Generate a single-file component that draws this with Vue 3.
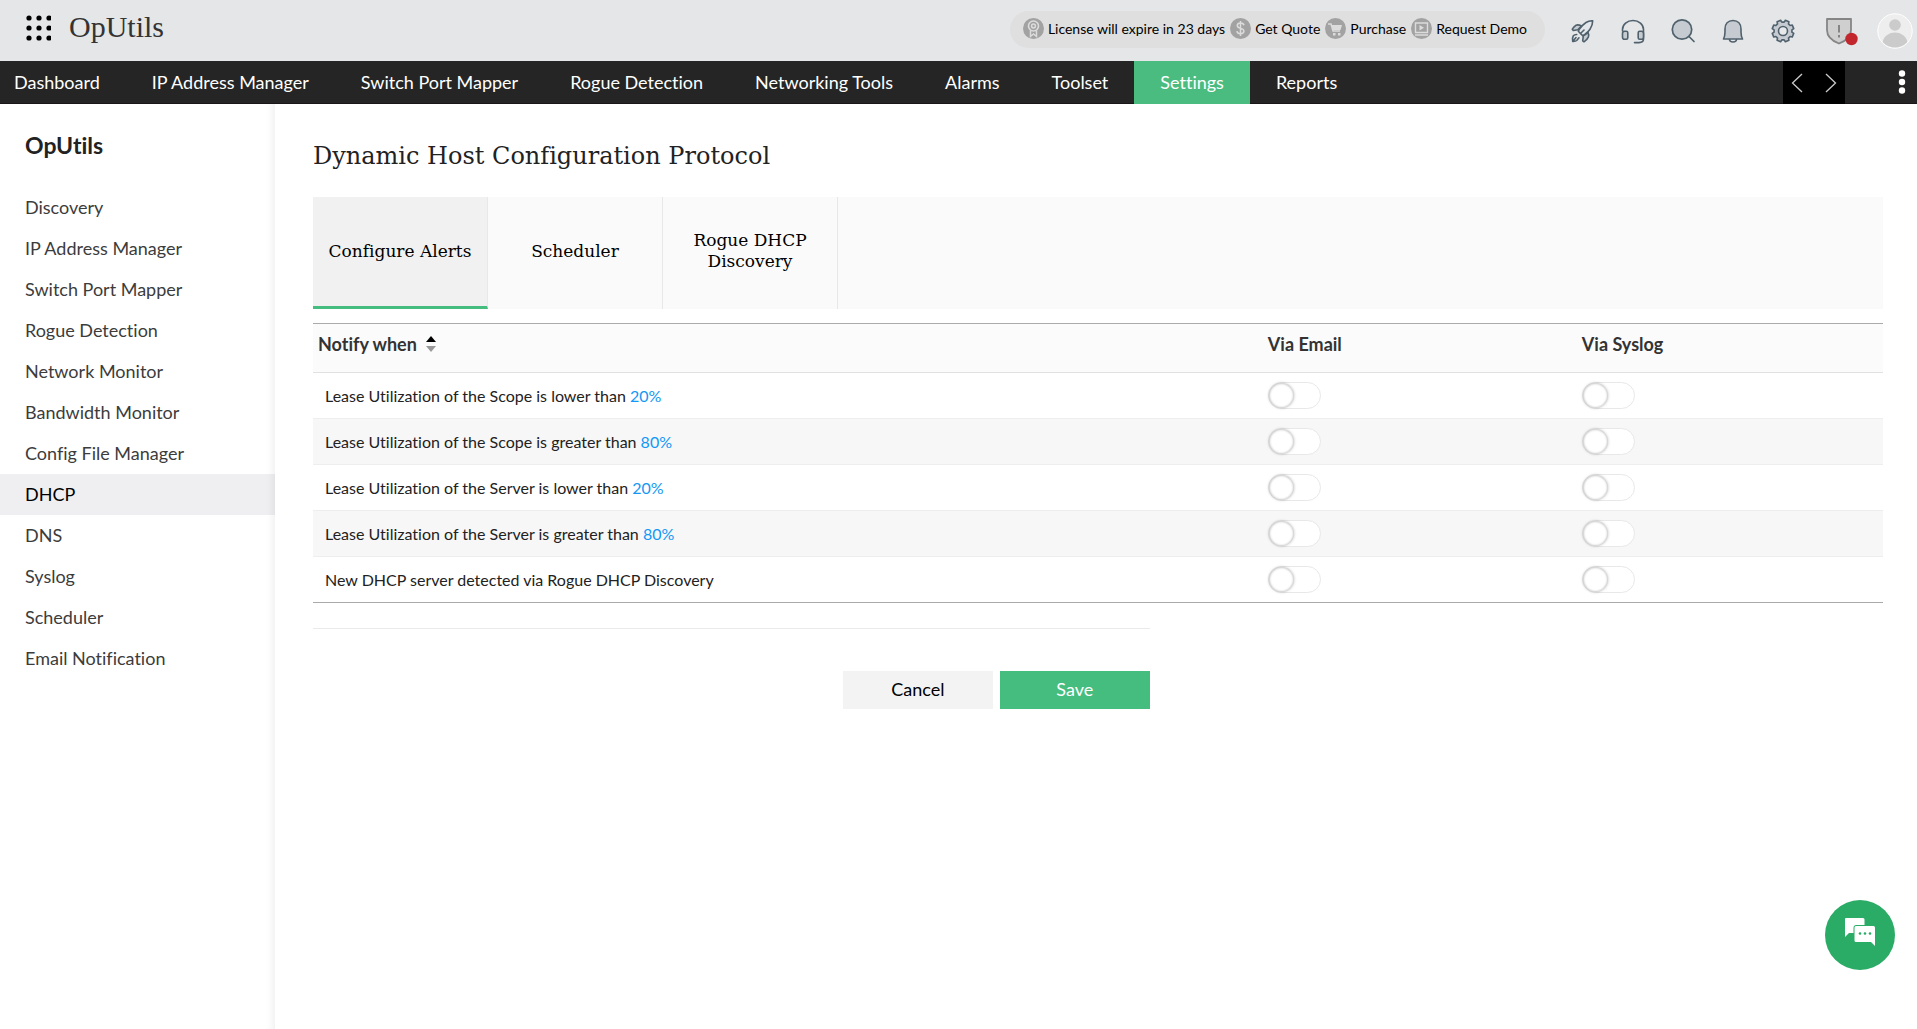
<script setup>
import { ref, reactive } from 'vue'

const navItems = ['Dashboard', 'IP Address Manager', 'Switch Port Mapper', 'Rogue Detection', 'Networking Tools', 'Alarms', 'Toolset', 'Settings', 'Reports']
const activeNav = ref('Settings')

const sideItems = ['Discovery', 'IP Address Manager', 'Switch Port Mapper', 'Rogue Detection', 'Network Monitor', 'Bandwidth Monitor', 'Config File Manager', 'DHCP', 'DNS', 'Syslog', 'Scheduler', 'Email Notification']
const activeSide = ref('DHCP')

const tabs = ['Configure Alerts', 'Scheduler', 'Rogue DHCP Discovery']
const activeTab = ref('Configure Alerts')

const alerts = reactive([
  { text: 'Lease Utilization of the Scope is lower than', value: '20%', email: false, syslog: false },
  { text: 'Lease Utilization of the Scope is greater than', value: '80%', email: false, syslog: false },
  { text: 'Lease Utilization of the Server is lower than', value: '20%', email: false, syslog: false },
  { text: 'Lease Utilization of the Server is greater than', value: '80%', email: false, syslog: false },
  { text: 'New DHCP server detected via Rogue DHCP Discovery', value: '', email: false, syslog: false },
])

// Outline of an eight-toothed gear centred on (13, 13)
const gearPoints = Array.from({ length: 8 }, (_, k) => k * 45 + 22.5)
  .flatMap((t) => [[t - 15, 9], [t - 10, 11], [t + 10, 11], [t + 15, 9]])
  .map(([deg, r]) => {
    const a = (deg * Math.PI) / 180
    return `${(13 + r * Math.cos(a)).toFixed(2)},${(13 + r * Math.sin(a)).toFixed(2)}`
  })
  .join(' ')
</script>

<template>
  <div class="app">
    <header class="topbar">
      <button class="icon-btn apps" aria-label="Apps">
        <svg width="26" height="26" viewBox="0 0 26 26">
          <template v-for="r in 3" :key="r">
            <circle v-for="c in 3" :key="c" :cx="c * 10 - 6" :cy="r * 10 - 7" r="2.6" fill="#000" />
          </template>
        </svg>
      </button>
      <a class="brand" href="#">OpUtils</a>

      <div class="license">
        <a href="#">
          <svg width="21" height="21" viewBox="0 0 21 21">
            <circle cx="10.500" cy="10.500" r="10.500" fill="#a2a2a2" />
            <g fill="none" stroke="#dcdcdc" stroke-width="1.500">
              <circle cx="10.500" cy="8" r="5" stroke-width="1.600" />
              <circle cx="10.500" cy="8" r="1.900" />
              <path d="M7.500 12.500v6l3-2.500 3 2.500v-6" />
            </g>
          </svg>
          <span>License will expire in 23 days</span>
        </a>
        <a href="#">
          <svg width="21" height="21" viewBox="0 0 21 21">
            <circle cx="10.500" cy="10.500" r="10.500" fill="#a2a2a2" />
            <path d="M14 7.300C13.600 5.700 12.300 5 10.600 5 8.700 5 7.300 6 7.300 7.600c0 3.800 6.600 1.800 6.600 5.500 0 1.700-1.500 2.700-3.400 2.700-2 0-3.300-.9-3.600-2.600M10.500 3v15" fill="none" stroke="#dcdcdc" stroke-width="1.500" />
          </svg>
          <span>Get Quote</span>
        </a>
        <a href="#">
          <svg width="21" height="21" viewBox="0 0 21 21">
            <circle cx="10.500" cy="10.500" r="10.500" fill="#a2a2a2" />
            <path d="M3 6h3l2 7h7" fill="none" stroke="#dcdcdc" stroke-width="1.500" />
            <path d="M6.500 7H17l-1.500 5H8zM8 15h2.500v2.500H8zM13 15h2.500v2.500H13z" fill="#dcdcdc" />
          </svg>
          <span>Purchase</span>
        </a>
        <a href="#">
          <svg width="21" height="21" viewBox="0 0 21 21">
            <circle cx="10.500" cy="10.500" r="10.500" fill="#a2a2a2" />
            <path d="M4.500 5h12v9.500h-12zM4 17h13" fill="none" stroke="#dcdcdc" stroke-width="1.400" />
            <path d="M8.500 7v5.500l4.500-2.700z" fill="#dcdcdc" />
          </svg>
          <span>Request Demo</span>
        </a>
      </div>

      <div class="tools">
        <button class="icon-btn" aria-label="Quick start">
          <svg width="26" height="26" viewBox="0 0 26 26" fill="none" stroke="#50616d" stroke-width="1.600" stroke-linejoin="round" stroke-linecap="round">
            <path d="M11.500 8C9.500 7 7.500 6.600 6 7.200 4.500 8 3.300 9.500 2.300 11.200l1 1.300 4.500-.7z" fill="#c5cbd0" />
            <path d="M18 14.500c.8 1.500.9 3 .3 4.600-.8 1.800-2.300 3.300-4.300 4.700l-1.300-1 .6-5z" fill="#c5cbd0" />
            <path d="M22.700 2.800c-2.500-.2-4.700.4-6.700 1.700-2.800 1.900-4.900 4.200-6.700 6.700l-1 2.100 4.400 4.500 2.100-1.300c2-1.500 3.800-3.200 5.200-5.300 1.700-2.500 2.700-5.200 2.700-8.400z" fill="#e4e7e9" />
            <path d="m10.500 15.500 3.500-3.500" />
            <path d="M6.700 16.500c-1.500 0-2.700.4-3.400 1.300-.8 1.200-.9 3.200-.6 5.600 1.800.1 3.100-.1 4-.9l2.300-2.700M6 19.500l-2 2.500" />
          </svg>
        </button>
        <button class="icon-btn" aria-label="Support">
          <svg width="26" height="26" viewBox="0 0 26 26" fill="none" stroke="#50616d" stroke-width="1.600" stroke-linecap="round" stroke-linejoin="round">
            <path d="M2.500 13v-1.500a10.500 9 0 0 1 21 0V21c0 2.500-1.500 3.600-4.500 3.600h-4.500" />
            <path d="M2.500 15.500c0-1.500.8-2.300 2-2.300h1.800c1 0 1.500.5 1.500 1.500v5c0 1-.5 1.600-1.500 1.600H4.500c-1.200 0-2-.8-2-2.300zM23.500 15.500c0-1.500-.8-2.300-2-2.300h-1.800c-1 0-1.500.5-1.500 1.500v5c0 1 .5 1.600 1.500 1.600h1.800c1.200 0 2-.8 2-2.300z" fill="#c5cbd0" />
          </svg>
        </button>
        <button class="icon-btn" aria-label="Search">
          <svg width="26" height="26" viewBox="0 0 26 26" fill="none" stroke="#50616d" stroke-width="1.700" stroke-linecap="round">
            <circle cx="12" cy="11.500" r="9.700" fill="#c5cbd0" />
            <path d="m19 18.500 5 5" />
          </svg>
        </button>
        <button class="icon-btn" aria-label="Notifications">
          <svg width="26" height="26" viewBox="0 0 26 26" fill="none" stroke="#50616d" stroke-width="1.600" stroke-linejoin="round" stroke-linecap="round">
            <path d="M9.500 21a3.500 3 0 0 0 7 0" fill="#e6e8ea" />
            <path d="M3.500 21c1-2 1.500-4 1.500-7v-3c0-5 3-8.500 8-8.500s8 3.500 8 8.500v3c0 3 .5 5 1.500 7z" fill="#c5cbd0" />
          </svg>
        </button>
        <button class="icon-btn" aria-label="Settings">
          <svg width="26" height="26" viewBox="0 0 26 26" stroke="#50616d" stroke-width="1.600" stroke-linejoin="round">
            <polygon :points="gearPoints" fill="#c5cbd0" />
            <circle cx="13" cy="13" r="4.500" fill="#e6e8ea" />
          </svg>
        </button>
        <button class="icon-btn shield" aria-label="Security alerts">
          <svg width="34" height="30" viewBox="0 0 34 30">
            <path d="M2 3h24v11c0 6-4 10.500-12 13.500C6 24.500 2 20 2 14z" fill="#cfcfd0" stroke="#858585" stroke-width="1.800" stroke-linejoin="round" />
            <path d="M14 9v7.500M14 19v2.500" stroke="#858585" stroke-width="2" />
            <circle cx="26.500" cy="23" r="6.200" fill="#c1272d" />
          </svg>
        </button>
        <button class="icon-btn" aria-label="Profile">
          <svg width="36" height="36" viewBox="0 0 36 36">
            <clipPath id="avatar-clip"><circle cx="18" cy="18" r="16.500" /></clipPath>
            <circle cx="18" cy="18" r="17.200" fill="#eee" stroke="#fff" />
            <g clip-path="url(#avatar-clip)" fill="#cbcbcb">
              <circle cx="18" cy="12" r="5.800" />
              <ellipse cx="18" cy="31" rx="12.500" ry="11.500" />
            </g>
          </svg>
        </button>
      </div>
    </header>

    <nav class="mainnav" aria-label="Main">
      <a v-for="n in navItems" :key="n" href="#" :class="{ active: n === activeNav }" @click.prevent="activeNav = n">{{ n }}</a>
      <div class="pager">
        <button aria-label="Previous">
          <svg width="12" height="20" viewBox="0 0 12 20"><path d="M11 1 1.500 10l9.500 9" /></svg>
        </button>
        <button aria-label="Next">
          <svg width="12" height="20" viewBox="0 0 12 20"><path d="m1 1 9.500 9L1 19" /></svg>
        </button>
      </div>
      <button class="kebab" aria-label="More">
        <svg width="8" height="24" viewBox="0 0 8 24" fill="#fff">
          <circle cx="4" cy="3.500" r="3.200" /><circle cx="4" cy="12" r="3.200" /><circle cx="4" cy="20.500" r="3.200" />
        </svg>
      </button>
    </nav>

    <div class="body">
      <aside class="sidebar">
        <h2>OpUtils</h2>
        <a v-for="s in sideItems" :key="s" href="#" :class="{ active: s === activeSide }" @click.prevent="activeSide = s">{{ s }}</a>
      </aside>

      <main class="content">
        <h1>Dynamic Host Configuration Protocol</h1>

        <div class="tabs" role="tablist">
          <button v-for="t in tabs" :key="t" role="tab" :aria-selected="t === activeTab" :class="{ active: t === activeTab }" @click="activeTab = t">{{ t }}</button>
        </div>

        <table>
          <thead>
            <tr>
              <th class="col-name">
                <span class="sort">Notify when
                  <svg width="10" height="16" viewBox="0 0 10 16"><path d="M5 0l5 6H0z" fill="#000" /><path d="M5 16l5-6H0z" fill="#999" /></svg>
                </span>
              </th>
              <th class="col-email">Via Email</th>
              <th>Via Syslog</th>
            </tr>
          </thead>
          <tbody>
            <tr v-for="a in alerts" :key="a.text">
              <td class="name">{{ a.text }} <a v-if="a.value" href="#">{{ a.value }}</a></td>
              <td><input v-model="a.email" class="switch" type="checkbox" :aria-label="a.text + ' via email'"></td>
              <td><input v-model="a.syslog" class="switch" type="checkbox" :aria-label="a.text + ' via syslog'"></td>
            </tr>
          </tbody>
        </table>

        <div class="actions">
          <button class="cancel">Cancel</button>
          <button class="save">Save</button>
        </div>
      </main>
    </div>

    <button class="chat" aria-label="Chat">
      <svg width="32" height="30" viewBox="0 0 32 30">
        <path d="M1.500 1h17.500a1.500 1.500 0 0 1 1.500 1.500V8h-8a3 3 0 0 0-3 3v5H5l-4 4V2z" fill="#fff" />
        <path d="M12 9h17.500a1.500 1.500 0 0 1 1.500 1.500V29l-4-4H12a1.500 1.500 0 0 1-1.500-1.500v-13A1.500 1.500 0 0 1 12 9z" fill="#fff" />
        <circle cx="16" cy="16.500" r="1.300" fill="#2aab66" /><circle cx="21" cy="16.500" r="1.300" fill="#2aab66" /><circle cx="26" cy="16.500" r="1.300" fill="#2aab66" />
      </svg>
    </button>
  </div>
</template>

<style>
body {
  background: #fff;
}
</style>

<style scoped>
.app {
  display: flex;
  flex-direction: column;
  min-height: 100vh;
  font-family: Lato, "Liberation Sans", sans-serif;
  font-size: 18px;
  font-variant-ligatures: none;
  color: #222;
}
.app * {
  box-sizing: border-box;
}
a {
  color: inherit;
  text-decoration: none;
}
button {
  border: 0;
  padding: 0;
  margin: 0;
  background: none;
  font: inherit;
  color: inherit;
  cursor: pointer;
}
svg {
  display: block;
  flex: none;
}
.topbar {
  display: flex;
  align-items: center;
  height: 61px;
  padding: 0 4px 0 25px;
  background: #e4e6e8;
}
.apps {
  margin-bottom: 6px;
}
.brand {
  margin: 0 auto 8px 18px;
  font-family: "Liberation Serif", serif;
  font-size: 30px;
  line-height: 36px;
  color: #333;
}
.license {
  display: flex;
  align-items: center;
  gap: 5px;
  height: 37px;
  margin: 0 25px 2px 0;
  padding: 0 18px 2px 13px;
  border-radius: 19px;
  background: #dfdfdf;
  color: #000;
  font-size: 14px;
}
.license a {
  display: flex;
  align-items: center;
  gap: 4px;
}
.tools {
  display: flex;
  align-items: center;
  gap: 24px;
}
.tools .shield {
  margin-left: 5px;
  margin-right: -6px;
}
.mainnav {
  display: flex;
  height: 43px;
  padding-right: 11px;
  background: #252525;
  border-bottom: 1px solid #1b1719;
  color: #fff;
}
.mainnav a {
  padding: 0 26px;
  line-height: 42px;
}
.mainnav a:first-child {
  padding-left: 14px;
}
.mainnav .active {
  height: 43px;
  background: #4abc80;
}
.pager {
  display: flex;
  align-items: center;
  justify-content: space-between;
  width: 62px;
  height: 43px;
  margin-left: auto;
  padding: 0 8px;
  background: #000;
}
.pager path {
  fill: none;
  stroke: #ccc;
  stroke-width: 1.3;
}
.kebab {
  margin-left: 53px;
}
.body {
  display: flex;
  flex: 1;
}
.sidebar {
  flex: none;
  width: 275px;
  padding-top: 22px;
  box-shadow: inset -9px 0 9px -7px rgba(0, 0, 0, .07);
}
.sidebar h2 {
  margin: 0 0 23px;
  padding-left: 25px;
  font-size: 23px;
  line-height: 38px;
  font-weight: 700;
}
.sidebar a {
  display: block;
  padding-left: 25px;
  line-height: 41px;
  color: #3c3c3c;
}
.sidebar .active {
  background: rgba(30, 30, 60, .07);
  color: #000;
}
.content {
  flex: 1;
  min-width: 0;
  padding: 32px 34px 40px 38px;
}
h1 {
  margin: 0 0 21px;
  font-family: "DejaVu Serif", serif;
  font-size: 24px;
  line-height: 40px;
  font-weight: 400;
}
.tabs {
  display: flex;
  background: #fafafa;
}
.tabs button {
  width: 175px;
  height: 112px;
  padding: 0 10px 4px;
  border-right: 1px solid #e8e8e8;
  font-family: "DejaVu Serif", serif;
  font-size: 17px;
  line-height: 21px;
  color: #000;
}
.tabs .active {
  padding-bottom: 1px;
  border-bottom: 3px solid #45bd7f;
  background: #f1f1f1;
}
table {
  width: 100%;
  margin-top: 14px;
  border-collapse: collapse;
  table-layout: fixed;
  border-top: 1px solid #aaa;
  border-bottom: 1px solid #aaa;
}
th {
  height: 49px;
  padding: 0 5px 8px;
  border-bottom: 1px solid #e1e1e1;
  background: #fbfbfb;
  text-align: left;
  font-weight: 700;
  color: #333;
}
.col-name {
  width: 60.5%;
}
.col-email {
  width: 20%;
}
.sort {
  display: flex;
  align-items: center;
  gap: 9px;
}
td {
  height: 46px;
  padding: 0 5px;
  border-top: 1px solid #eee;
  font-size: 16px;
}
td.name {
  padding-left: 12px;
}
td a {
  color: #1298f5;
}
tbody tr:nth-child(even) {
  background: #f7f7f7;
}
.switch {
  appearance: none;
  display: block;
  width: 53px;
  height: 27px;
  margin: 0;
  border: 1px solid #e8e8e8;
  border-radius: 14px;
  background: #fff;
}
.switch::before {
  content: "";
  display: block;
  width: 25px;
  height: 25px;
  border-radius: 50%;
  background: #fff;
  box-shadow: inset 0 0 2px 1px rgba(0, 0, 0, .2), 0 0 3px rgba(0, 0, 0, .25);
}
.switch:checked {
  background: #45bd7f;
}
.switch:checked::before {
  margin-left: auto;
}
.actions {
  display: flex;
  justify-content: flex-end;
  gap: 7px;
  width: 53.3%;
  margin-top: 25px;
  padding-top: 42px;
  border-top: 1px solid #eaeaea;
}
.actions button {
  width: 150px;
  height: 38px;
  padding-bottom: 2px;
}
.cancel {
  background: #f3f3f3;
  color: #000;
}
.save {
  background: #45bd7f;
  color: #fff;
}
.chat {
  position: fixed;
  right: 22px;
  bottom: 59px;
  display: flex;
  align-items: center;
  justify-content: center;
  width: 70px;
  height: 70px;
  padding-bottom: 6px;
  border-radius: 50%;
  background: #2aab66;
}
</style>
